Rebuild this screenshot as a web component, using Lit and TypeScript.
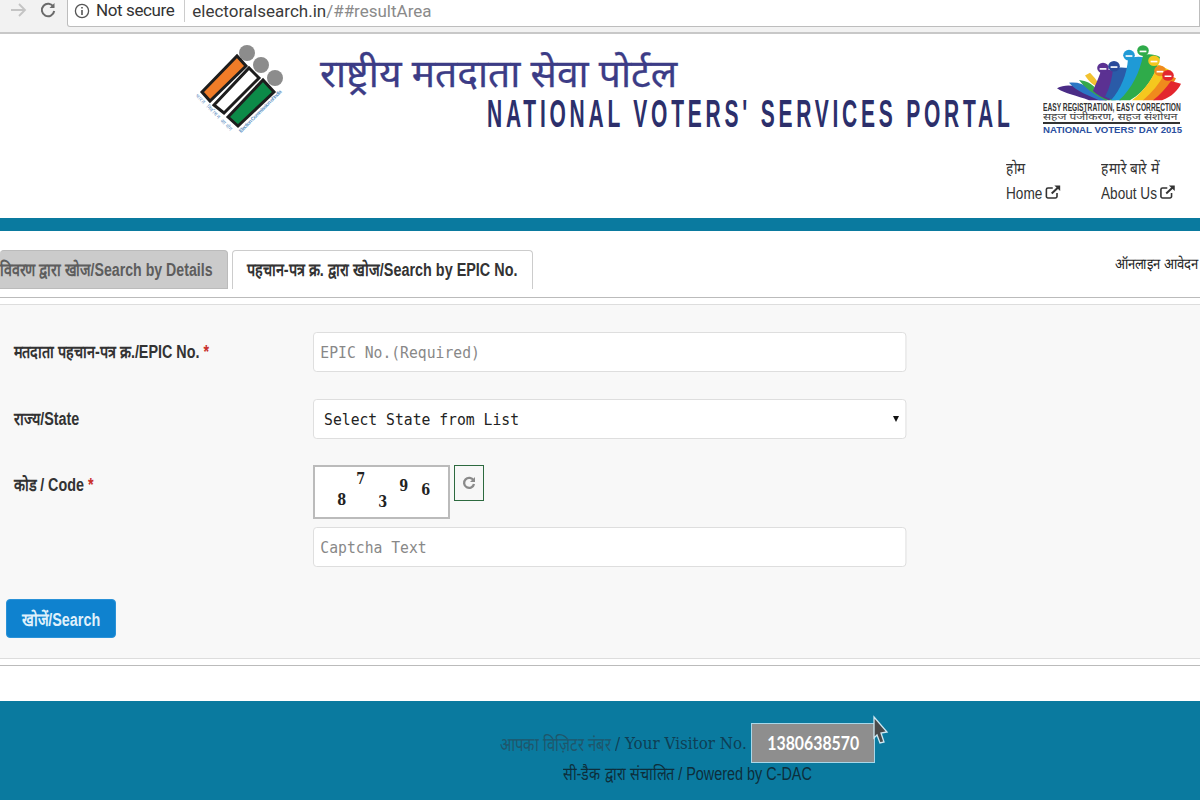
import { LitElement, html, css, svg } from "lit";
import { customElement } from "lit/decorators.js";

const extIcon = html`<svg class="ext" viewBox="0 0 16 16" width="20" height="16" preserveAspectRatio="none" fill="none" stroke="#333" stroke-width="1.5">
  <path d="M12 9v3.5a1.5 1.5 0 0 1-1.5 1.5h-7A1.5 1.5 0 0 1 2 12.5v-7A1.5 1.5 0 0 1 3.5 4H8"/>
  <path d="M7 9.5 13.5 3" stroke-width="1.8"/><path d="M9.5 1.5h5.5V7z" fill="#333" stroke="none"/></svg>`;

const eciLogo = html`<svg class="eci" viewBox="0 0 100 100" width="100" height="100">
  <g fill="#8c8c8c"><circle cx="57" cy="18" r="8"/><circle cx="71" cy="30" r="8"/><circle cx="85" cy="43" r="8"/></g>
  <g stroke="#1d1d1d" stroke-width="3">
    <path d="M12 57 47 21l9 10-36 35z" fill="#f07c28"/>
    <path d="M24 70 59 33l10 10-35 35z" fill="#fff"/>
    <path d="M38 82 73 45l11 12-36 34z" fill="#0c8a48"/>
  </g>
  <g fill="#5f93c4" font-family="'Liberation Sans', sans-serif" font-size="5.2">
    <text transform="translate(5 61) rotate(45)" textLength="50">भारत निर्वाचन आयोग</text>
    <text transform="translate(51 98) rotate(-45)" textLength="58" font-weight="700">Election Commission of India</text>
  </g>
</svg>`;

const band = (d: string, c: string) => svg`<path d=${d} fill=${c}/>`;
const head = (x: number, y: number, c: string) => svg`<circle cx=${x} cy=${y} r="5.8" fill=${c}/><path d="M${x - 3.4} ${y}h6.8v1.8h-6.8z" fill="#fff"/>`;

const nvdLogo = html`<svg class="nvd-art" viewBox="0 0 140 58" width="140" height="58"><g transform="translate(0 1) scale(1 .92)">
  ${band("M14 46c8-5 18-3 26 0 2 4 10 8 24 13H46C34 54 22 52 14 46z", "#4a2c86")}
  ${band("M26 40c8-1 14 1 20 6 2 3 8 8 18 13H56C46 54 34 50 26 40z", "#2a76c4")}
  ${band("M36 37c8 1 12 4 15 7 3 5 12 11 22 15H62C52 53 42 46 36 37z", "#35a84c")}
  ${band("M42 32l5-3 5 6c3 4 4 8 6 11-6-2-12-7-16-14z", "#f2c230")}
  ${band("M58 27c-3 10-6 16-8 22 4 4 10 8 16 10l10-8c4-8 5-14 5-25l-9 2c-2-2-9-3-14-1z", "#5b3192")}
  ${band("M70 25c-1 10-3 20-8 30l8 4c10-6 15-16 19-30l-4-5c-5-1-11-1-15 1z", "#2a5ba8")}
  ${band("M85 14c-1 16-7 33-17 45h10c14-11 22-27 27-45-5-3-14-3-20 0z", "#1f9ad6")}
  ${band("M100 10c-3 18-11 36-24 49h11c16-10 26-27 30-47-5-3-12-4-17-2z", "#2fab4a")}
  ${band("M115 20c-5 15-14 29-26 39h12c14-8 22-19 27-32z", "#f5c71e")}
  ${band("M122 30c-6 11-13 21-22 29h12c11-6 17-15 21-24z", "#f08a1d")}
  ${band("M128 38c-5 8-11 15-18 21h9c10-4 16-11 19-18z", "#e3262e")}
  ${head(60, 24, "#5b3192")}${head(71, 22, "#2a4a9a")}${head(86, 10, "#1f9ad6")}${head(100, 5, "#2fab4a")}${head(111, 16, "#f5c71e")}${head(117, 27, "#f08a1d")}${head(125, 32, "#e3262e")}
</g></svg>`;

@customElement("app-root")
export class AppRoot extends LitElement {
  static styles = css`
    :host { display: block; width: 1200px; height: 800px; overflow: hidden; position: relative; background: #fff;
      font-family: "Liberation Sans", sans-serif; color: #333; }
    .sq { display: inline-block; transform-origin: 0 50%; white-space: nowrap; }
    .s78 { transform: scaleX(.787); }
    .s80 { transform: scaleX(.8); }
    .s82 { transform: scaleX(.82); }

    .chrome { height: 34px; box-sizing: border-box; background: #f2f2f2; border-bottom: 2px solid #c8c8c8;
      display: flex; padding-left: 6px; align-items: flex-start; }
    .nav-btn { width: 24px; height: 22px; margin-top: -1px; display: flex; align-items: center; justify-content: center; }
    .nav-btn + .nav-btn { margin-left: 6px; }
    .url { margin-left: 7px; flex: 1; height: 27px; box-sizing: border-box; background: #fff; border: 1px solid #bdbdbd; border-top: 0;
      border-radius: 0 0 0 3px; display: flex; align-items: center; font: 17px "Roboto", sans-serif; padding: 0 0 5px 6px; white-space: nowrap; }
    .info { margin-right: 6px; flex: none; }
    .secure { color: #333; padding-right: 10px; border-right: 1px solid #ccc; line-height: 23px; margin-right: 7px; letter-spacing: -.4px; }
    .host { color: #3a3a3a; font-size: 17px; }
    .path { color: #8a8a8a; font-size: 17px; }

    .header { height: 184px; display: grid; grid-template-columns: 190px 130px 540px 183px 1fr; grid-template-rows: 111px 1fr; }
    .eci { grid-column: 2; grid-row: 1; margin-top: 1px; }
    .titles { grid-column: 3 / span 2; grid-row: 1; padding-top: 14px; }
    .hi-title { font: 400 39px/48px "Noto Sans", "Liberation Sans", sans-serif; color: #3c3c86; margin: 0; white-space: nowrap; -webkit-text-stroke: .3px #3c3c86; }
    .en-title { font: 700 38px/36px "Liberation Sans", sans-serif; color: #2c2f6b; letter-spacing: 6.8px; margin: 0 0 0 167px; white-space: nowrap;
      transform: scaleX(.553); transform-origin: 0 50%; }
    .nvd { grid-column: 5; grid-row: 1; margin-top: 11px; width: 140px; color: #333; }
    .nvd-art { display: block; }
    .nvd-l1, .nvd-l2, .nvd-l3 { white-space: nowrap; transform-origin: 0 50%; }
    .nvd-l1 { font: 700 10px/9px "Liberation Sans", sans-serif; color: #333; transform: scaleX(.665); }
    .nvd-l2 { font: 10px/9px "Noto Sans", "Liberation Sans", sans-serif; color: #444; transform: scaleX(1.2); }
    .nvd-rule { height: 2px; background: #333; margin: 1px 0 0; width: 137px; }
    .nvd-l3 { font: 700 9.8px/11px "Liberation Sans", sans-serif; color: #2a4fa0; transform: scaleX(.98); }
    .links { grid-column: 1 / -1; grid-row: 2; display: grid; grid-template-columns: 95px 1fr; padding: 11px 0 0 1006px; }
    .links a { display: block; font-size: 16px; line-height: 25px; color: #333; transform: scaleX(.85); transform-origin: 0 50%; white-space: nowrap; }
    .links span { display: block; }
    .ext { vertical-align: -1px; margin-left: 2px; }
    .bar { height: 13px; background: #0a7a9f; }

    .tabs { height: 58px; margin-top: 19px; display: flex; align-items: flex-start; box-sizing: border-box; }
    .tab { height: 39px; box-sizing: border-box; font-weight: 700; font-size: 18px; line-height: 38px; border-radius: 4px 4px 0 0; white-space: nowrap; overflow: hidden; }
    .tab.off { width: 228px; background: #cbcbcb; color: #5d5d5d; border: 1px solid #bbb; border-left: 0; }
    .tab.on { margin-left: 4px; width: 301px; background: #fff; color: #333; border: 1px solid #ccc; border-bottom: 0; padding-left: 14px; }
    .apply { margin-left: auto; padding: 4px 3px 0 0; font-size: 15px; line-height: 20px; color: #222; white-space: nowrap; transform: scaleX(.87); transform-origin: 100% 50%; }
    .rule1 { border-top: 1px solid #bbb; height: 7px; box-sizing: border-box; margin-top: -11px; }

    .panel { height: 355px; box-sizing: border-box; background: #f8f8f8; border-top: 1px solid #ddd; border-bottom: 1px solid #ddd; padding-top: 27px; display: grid;
      grid-template-columns: 313px 593px; grid-auto-rows: min-content; }
    label { font-weight: 700; font-size: 17.5px; color: #333; padding: 9px 0 0 14px; line-height: 22px; white-space: nowrap; }
    .req { color: #c9302c; }
    .scaled { width: 645px; height: 40px; box-sizing: border-box; border: 1px solid #ddd; border-radius: 4px; background: #fff; appearance: none;
      font: 16px "DejaVu Sans Mono", "Liberation Mono", monospace; padding: 0 7px; color: #333; outline: 0; display: block;
      transform: scaleX(.92); transform-origin: 0 50%; }
    .scaled::placeholder { color: #888; opacity: 1; }
    select.scaled { padding-left: 11px; color: #222; }
    .cell { margin-bottom: 27px; position: relative; }
    .cell.tight { margin-bottom: 26px; }
    .arrow { position: absolute; left: 580px; top: 17px; width: 0; height: 0; border: 3.5px solid transparent; border-top: 6px solid #111; border-bottom: 0; }
    .code-cell { display: flex; flex-direction: column; gap: 8px; }
    .captcha-row { display: flex; align-items: flex-start; gap: 4px; }
    .captcha { width: 137px; height: 54px; box-sizing: border-box; border: 2px solid #bbb; background: #fff; position: relative;
      font: 700 16.5px "DejaVu Serif", serif; color: #222; }
    .captcha span { position: absolute; transform: scaleX(.78); }
    .d8 { left: 21px; top: 23px; } .d7 { left: 40px; top: 2px; } .d3 { left: 62px; top: 25px; } .d9 { left: 83px; top: 9px; } .d6 { left: 105px; top: 13px; }
    .refresh { width: 30px; height: 36px; box-sizing: border-box; border: 1px solid #2d6a3f; background: #f7f7f7; display: flex; align-items: center; justify-content: center; }
    .search { grid-column: 1 / -1; width: 110px; height: 39px; margin: 5px 0 0 6px; border: 1px solid #2a92d8; border-radius: 4px; background: #0f82cf; color: #dff0fb;
      font: 700 18px "Liberation Sans", sans-serif; padding: 0; white-space: nowrap; }
    .search span { display: inline-block; transform: scaleX(.8); }
    .rule2 { height: 7px; box-sizing: border-box; border-bottom: 1px solid #bbb; margin-bottom: 35px; }

    .footer { height: 99px; background: #0a7a9f; box-sizing: border-box; padding-top: 22px; display: flex; flex-direction: column; }
    .visitor { display: flex; align-items: flex-start; padding-left: 500px; }
    .line { width: 251px; margin: 8px 0 0; display: flex; white-space: nowrap; }
    .hi { width: 115px; font: 19px "Liberation Serif", serif; color: #1f566b; transform: scaleX(.78); transform-origin: 0 50%; }
    .en { font: 17px/24px "DejaVu Serif", serif; color: #0e3f55; transform: scaleX(.89); transform-origin: 0 50%; }
    .count { width: 124px; height: 40px; box-sizing: border-box; background: #8e8e8e; border: 1px solid #a8d8ea; color: #fff; font: 700 18px/38px "Lato", sans-serif; text-align: center; }
    .count span { display: inline-block; transform: scaleX(.88); }
    .cursor { position: absolute; left: 872px; top: 715px; }
    .powered { margin: 0 0 0 563px; font-size: 18px; color: #0d2e3b; line-height: 22px; white-space: nowrap; transform: scaleX(.8); transform-origin: 0 50%; }
  `;

  render() {
    return html`
      <div class="chrome">
        <div class="nav-btn"><svg width="18" height="18" viewBox="0 0 18 18" fill="none" stroke="#c4c4c4" stroke-width="1.8"><path d="M2 9h14M10 3l6 6-6 6"/></svg></div>
        <div class="nav-btn"><svg width="18" height="18" viewBox="0 0 18 18" fill="none" stroke="#6a6a6a" stroke-width="2"><path d="M14.5 6a6.2 6.2 0 1 0 .7 4"/><path d="M15.5 2v5h-5z" fill="#6a6a6a" stroke="none"/></svg></div>
        <div class="url">
          <svg class="info" width="16" height="16" viewBox="0 0 16 16" fill="none" stroke="#555" stroke-width="1.3"><circle cx="8" cy="8" r="6.6"/><path d="M8 7v5" stroke-width="1.6"/><path d="M8 4v1.6" stroke-width="1.6"/></svg>
          <span class="secure">Not secure</span><span class="host">electoralsearch.in</span><span class="path">/##resultArea</span>
        </div>
      </div>
      <header class="header">
        ${eciLogo}
        <div class="titles">
          <p class="hi-title">राष्ट्रीय मतदाता सेवा पोर्टल</p>
          <p class="en-title">NATIONAL VOTERS' SERVICES PORTAL</p>
        </div>
        <div class="nvd">
          ${nvdLogo}
          <div class="nvd-l1">EASY REGISTRATION, EASY CORRECTION</div>
          <div class="nvd-l2">सहज पंजीकरण, सहज संशोधन</div>
          <div class="nvd-rule"></div>
          <div class="nvd-l3">NATIONAL VOTERS' DAY 2015</div>
        </div>
        <nav class="links">
          <a><span>होम</span>Home${extIcon}</a>
          <a><span>हमारे बारे में</span>About Us${extIcon}</a>
        </nav>
      </header>
      <div class="bar"></div>
      <div class="tabs">
        <div class="tab off"><span class="sq s78">विवरण द्वारा खोज/Search by Details</span></div>
        <div class="tab on"><span class="sq s80">पहचान-पत्र क्र. द्वारा खोज/Search by EPIC No.</span></div>
        <div class="apply">ऑनलाइन आवेदन</div>
      </div>
      <div class="rule1"></div>
      <form class="panel">
        <label><span class="sq s82">मतदाता पहचान-पत्र क्र./EPIC No. <span class="req">*</span></span></label>
        <div class="cell"><input class="scaled" placeholder="EPIC No.(Required)" /></div>
        <label><span class="sq s82">राज्य/State</span></label>
        <div class="cell tight"><select class="scaled"><option>Select State from List</option></select><i class="arrow"></i></div>
        <label><span class="sq s82">कोड / Code <span class="req">*</span></span></label>
        <div class="cell code-cell">
          <div class="captcha-row">
            <div class="captcha">
              <span class="d8">8</span><span class="d7">7</span><span class="d3">3</span><span class="d9">9</span><span class="d6">6</span>
            </div>
            <div class="refresh"><svg width="16" height="16" viewBox="0 0 16 16" fill="none" stroke="#8a8a8a" stroke-width="2.3"><path d="M12.5 5.5a5 5 0 1 0 .5 3.5"/><path d="M14 2v5H9z" fill="#8a8a8a" stroke="none"/></svg></div>
          </div>
          <input class="scaled" placeholder="Captcha Text" />
        </div>
        <button class="search" type="button"><span>खोजें/Search</span></button>
      </form>
      <div class="rule2"></div>
      <footer class="footer">
        <div class="visitor">
          <div class="line"><span class="hi">आपका विज़िटर नंबर</span><span class="en">/ Your Visitor No.</span></div>
          <div class="count"><span>1380638570</span></div>
        </div>
        <div class="powered">सी-डैक द्वारा संचालित / Powered by C-DAC</div>
      </footer>
      <svg class="cursor" width="17" height="32" viewBox="0 0 17 32"><path d="M2 2 15 17l-6 1 3 9-4 1-3-8-3 3z" fill="#4a4a4a" stroke="#cfe8f2" stroke-width="1.3"/></svg>
    `;
  }
}
